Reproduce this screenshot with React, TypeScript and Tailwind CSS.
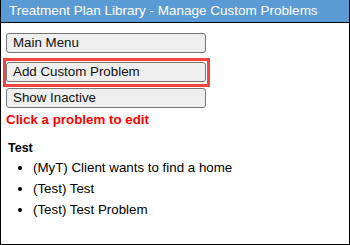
export default function App() {
  const items = ["(MyT) Client wants to find a home", "(Test) Test", "(Test) Test Problem"];
  const btn =
    "block w-[200px] h-[20px] bg-[#efefef] border border-[#767676] rounded-[3px] text-left px-[6px] text-[13.33px] leading-[18px] text-[#111]";
  return (
    <div className="w-[350px] h-[245px] bg-white border border-black border-t-0 font-['Liberation_Sans',Arial,sans-serif] text-[13.33px] text-black overflow-hidden">
      <div className="h-[23px] bg-[#5b9bd5] border-b border-black px-[8px] text-white text-[13.5px] leading-[22px]">
        Treatment Plan Library - Manage Custom Problems
      </div>
      <div className="px-[5px] pt-[10px]">
        <button className={btn}>Main Menu</button>
        <div className="ml-[-3px] mt-[5px] w-[207px] border-[3px] border-[#ef4444] pt-px pb-[2px]">
          <button className={btn}>Add Custom Problem</button>
        </div>
        <button className={`${btn} mt-px`}>Show Inactive</button>
        <p className="mt-[3px] text-[#ff0000] font-bold leading-[18px]">Click a problem to edit</p>
        <p className="mt-[10px] ml-[2px] font-bold text-[12.5px] leading-[18px]">Test</p>
        <ul className="mt-0 pl-[27px] list-disc">
          {items.map((t) => (
            <li key={t} className="leading-[21px]">
              {t}
            </li>
          ))}
        </ul>
      </div>
    </div>
  );
}
